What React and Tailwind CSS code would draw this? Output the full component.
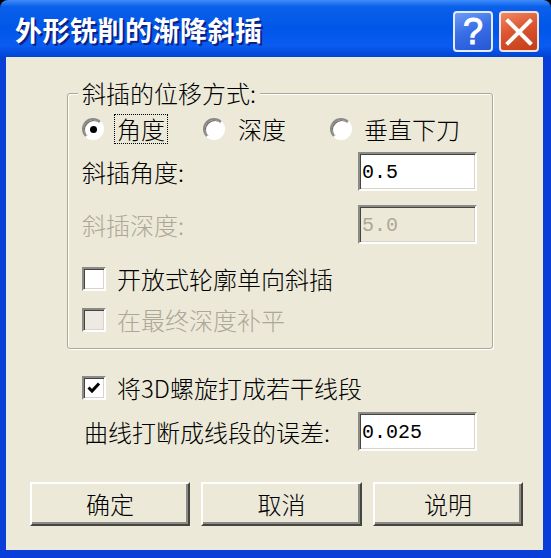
import React from "react";

const cjk = "font-['Noto_Sans_CJK_SC','Noto_Sans_CJK_JP',sans-serif]";
const mono = "font-['Liberation_Mono','DejaVu_Sans_Mono',monospace]";

function Radio({ checked }) {
  return (
    <span className="relative flex h-[22px] w-[22px] shrink-0 items-center justify-center rounded-full border-2 border-t-[#8a8a86] border-l-[#8a8a86] border-b-[#ffffff] border-r-[#ffffff] bg-white shadow-[inset_1px_1px_0_#6b6b64]">
      {checked && <span className="h-[7px] w-[7px] rounded-full bg-black" />}
    </span>
  );
}

function Check({ checked, disabled }) {
  return (
    <span
      className={`flex h-[24px] w-[24px] shrink-0 items-center justify-center border-2 border-t-[#8a8a86] border-l-[#8a8a86] border-b-[#ffffff] border-r-[#ffffff] shadow-[inset_1px_1px_0_#45453f,inset_-1px_-1px_0_#d8d5c8] ${disabled ? "bg-[#eceae2]" : "bg-white"}`}
    >
      {checked && (
        <svg width="16" height="16" viewBox="0 0 16 16">
          <polyline points="2.5,7.5 6,11 13,3.5" fill="none" stroke="#000" strokeWidth="3" />
        </svg>
      )}
    </span>
  );
}

function Field({ value, disabled }) {
  return (
    <div
      className={`flex h-[39px] w-[119px] items-center border-2 border-t-[#8a8a86] border-l-[#8a8a86] border-b-[#ffffff] border-r-[#ffffff] pl-[2px] pt-[2px] shadow-[inset_1px_1px_0_#45453f,inset_-1px_-1px_0_#d8d5c8] ${mono} text-[20px] ${disabled ? "bg-[#ECE9D8] text-[#aca899]" : "bg-white text-black"}`}
    >
      {value}
    </div>
  );
}

function Btn({ label, w }) {
  return (
    <button
      className={`flex h-[44px] items-center justify-center border-2 border-t-white border-l-white border-b-[#45453f] border-r-[#45453f] bg-[#ECE9D8] text-[24px] leading-[26px] text-black shadow-[inset_-2px_-2px_0_#8a8a86] ${w}`}
    >
      {label}
    </button>
  );
}

export default function App() {
  return (
    <div className={`h-[558px] w-[551px] bg-black ${cjk}`}>
      <div className="flex h-full flex-col overflow-hidden rounded-t-[8px]">
        <div className="flex h-[57px] shrink-0 items-start bg-[linear-gradient(180deg,#3d8cf8_0%,#0a5fea_12%,#0056e8_50%,#0a5cf0_80%,#0044d4_100%)] pl-[15px] pr-[12px]">
          <span className="mt-[15px] text-[27px] font-bold leading-[30px] tracking-[0.5px] text-white [text-shadow:2px_2px_0_#0b2186]">
            外形铣削的渐降斜插
          </span>
          <div className="ml-auto mt-[11px] flex gap-[6px]">
            <div className="flex h-[41px] w-[40px] items-center justify-center rounded-[4px] border-2 border-[#e4ecfb] bg-[linear-gradient(160deg,#6f9cf7_0%,#3a6fe6_45%,#2557d6_100%)] font-['Liberation_Sans',Arial,sans-serif] text-[36px] leading-none text-white [-webkit-text-stroke:1px_white]">
              ?
            </div>
            <div className="flex h-[41px] w-[40px] items-center justify-center rounded-[4px] border-2 border-[#f3e2da] bg-[linear-gradient(160deg,#ee8b64_0%,#dc5430_45%,#c23d19_100%)]">
              <svg width="30" height="30" viewBox="0 0 30 30">
                <path d="M4 4 L26 26 M26 4 L4 26" stroke="#fff" strokeWidth="4" strokeLinecap="square" />
              </svg>
            </div>
          </div>
        </div>

        <div className="flex flex-1 flex-col border-b-[8px] border-l-[6px] border-r-[8px] border-[#0a3ed8] bg-[#ECE9D8] text-[24px] font-light leading-[26px] text-black">
          <fieldset className="ml-[61px] mt-[23px] w-[426px] rounded-[3px] border border-[#aba898] pb-[16px] pl-[14px] pr-[15px] shadow-[1px_1px_0_#ffffff,inset_1px_1px_0_#ffffff]">
            <legend className="ml-[-4px] bg-[#ECE9D8] px-[4px] leading-[26px]">斜插的位移方式:</legend>

            <div className="mt-[8px] flex h-[30px] items-center">
              <div className="flex w-[121px] items-center">
                <Radio checked />
                <span className="ml-[10px] border border-dotted border-black px-[2px] py-[1px]">角度</span>
              </div>
              <div className="flex w-[127px] items-center">
                <Radio />
                <span className="ml-[13px]">深度</span>
              </div>
              <div className="flex items-center">
                <Radio />
                <span className="ml-[12px]">垂直下刀</span>
              </div>
            </div>

            <div className="mt-[8px] flex h-[39px] items-center justify-between">
              <span>斜插角度:</span>
              <Field value="0.5" />
            </div>

            <div className="mt-[14px] flex h-[39px] items-center justify-between">
              <span className="text-[#aca899]">斜插深度:</span>
              <Field value="5.0" disabled />
            </div>

            <div className="mt-[23px] flex h-[24px] items-center gap-[11px]">
              <Check />
              <span>开放式轮廓单向斜插</span>
            </div>

            <div className="mt-[17px] flex h-[24px] items-center gap-[11px]">
              <Check disabled />
              <span className="text-[#aca899]">在最终深度补平</span>
            </div>
          </fieldset>

          <div className="ml-[76px] mt-[27px] flex h-[24px] items-center gap-[11px]">
            <Check checked />
            <span>将3D螺旋打成若干线段</span>
          </div>

          <div className="ml-[76px] mt-[12px] flex h-[39px] items-center">
            <span className="w-[276px] pl-[2px]">曲线打断成线段的误差:</span>
            <Field value="0.025" />
          </div>

          <div className="ml-[24px] mt-[31px] flex gap-[11px]">
            <Btn label="确定" w="w-[160px]" />
            <Btn label="取消" w="w-[161px]" />
            <Btn label="说明" w="w-[150px]" />
          </div>
        </div>
      </div>
    </div>
  );
}
